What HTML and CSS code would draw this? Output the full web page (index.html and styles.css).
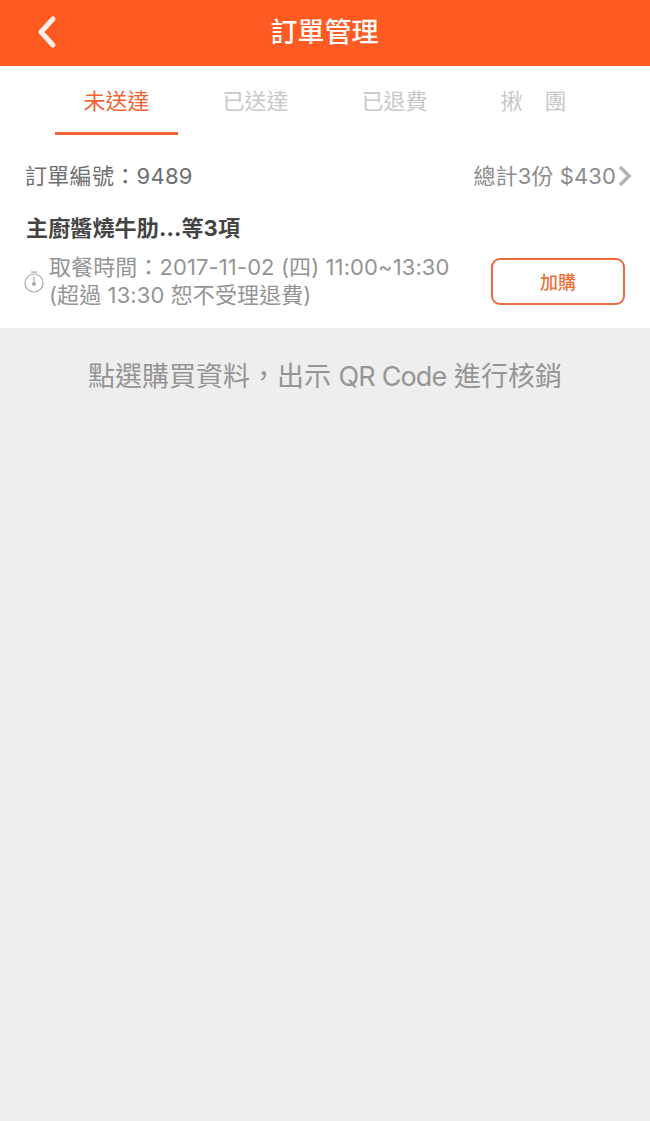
FILE: index.html
```html
<!DOCTYPE html>
<html lang="zh-Hant">
<head>
<meta charset="utf-8">
<title>訂單管理</title>
<link rel="stylesheet" href="styles.css">
</head>
<body>
<header class="topbar">
  <svg class="back" width="24" height="34" viewBox="0 0 24 34"><path d="M18 4 L6 17 L18 30" fill="none" stroke="#f6eee9" stroke-width="5" stroke-linecap="round" stroke-linejoin="round"/></svg>
  <h1 class="title">訂單管理</h1>
</header>
<nav class="tabs">
  <div class="tab active"><span>未送達</span></div>
  <div class="tab"><span>已送達</span></div>
  <div class="tab"><span>已退費</span></div>
  <div class="tab"><span>揪　團</span></div>
</nav>
<section class="order">
  <div class="order-head">
    <span class="num">訂單編號：9489</span>
    <span class="total">總計3份 $430<svg class="chev" width="15" height="22" viewBox="0 0 15 22"><path d="M3 2 L12 11 L3 20" fill="none" stroke="#b4b4b4" stroke-width="3.6"/></svg></span>
  </div>
  <div class="order-name">主廚醬燒牛肋...等3項</div>
  <div class="order-foot">
    <svg class="clock" width="20" height="24" viewBox="0 0 20 24"><g fill="none" stroke="#a8a8a8" stroke-width="1.2"><circle cx="10" cy="13" r="9"/><path d="M7 2.2 H13 M10 7 V13"/></g><circle cx="10" cy="14" r="2" fill="#a8a8a8"/></svg>
    <div class="time">取餐時間：2017-11-02 (四) 11:00~13:30<br>(超過 13:30 恕不受理退費)</div>
    <button class="buy">加購</button>
  </div>
</section>
<main class="hint">點選購買資料，出示 <span class="latin">QR Code</span> 進行核銷</main>
</body>
</html>
```
FILE: styles.css
```css
* { box-sizing: border-box; }
html, body { margin: 0; height: 100%; }
body {
  width: 650px;
  height: 1121px;
  overflow: hidden;
  display: flex;
  flex-direction: column;
  background: #eeeeee;
  font-family: "Inter", "Noto Sans CJK TC", sans-serif;
}
.topbar {
  position: relative;
  height: 66px;
  background: #ff5a22;
  display: flex;
  align-items: center;
  justify-content: center;
  flex: none;
}
.back { position: absolute; left: 35px; top: 15px; }
.title {
  margin: 0 1px 2px 0;
  color: #fff;
  font-size: 27px;
  font-weight: 500;
  line-height: 1;
}
.tabs {
  flex: none;
  height: 70px;
  background: #fff;
  display: grid;
  grid-template-columns: repeat(4, 123px);
  column-gap: 16px;
  padding-left: 55px;
}
.tab {
  height: 69px;
  padding-top: 20px;
  text-align: center;
  font-size: 22px;
  line-height: 30px;
  color: #c8c8c8;
}
.tab.active {
  color: #f26130;
  border-bottom: 3px solid #f26130;
}
.order {
  flex: none;
  height: 192px;
  background: #fff;
  padding: 24px 25px 0 25px;
}
.order-head {
  display: flex;
  justify-content: space-between;
  align-items: center;
  font-size: 22px;
  line-height: 32px;
  color: #6e6e6e;
}
.num { letter-spacing: 0.3px; }
.total {
  display: flex;
  align-items: center;
  color: #8c8c8c;
  margin-right: -7px;
  letter-spacing: 0.1px;
}
.chev { margin-left: 1px; }
.order-name {
  margin-top: 20px;
  margin-left: 1px;
  font-size: 22px;
  line-height: 32px;
  font-weight: 700;
  letter-spacing: 0.15px;
  color: #444;
}
.order-foot {
  display: flex;
  align-items: center;
  margin-top: 9px;
  margin-left: -1px;
}
.clock { flex: none; margin-right: 5px; margin-top: 2px; }
.time {
  flex: 1;
  font-size: 22px;
  line-height: 28px;
  letter-spacing: 0.1px;
  color: #949494;
  white-space: nowrap;
}
.buy {
  flex: none;
  width: 134px;
  height: 47px;
  border: 2px solid #ec6a3c;
  border-radius: 9px;
  background: #fff;
  color: #f0703c;
  font: 500 18px "Inter", "Noto Sans CJK TC", sans-serif;
  padding: 0;
}
.hint {
  flex: 1;
  padding-top: 31px;
  text-align: center;
  font-size: 27px;
  line-height: 36px;
  color: #959595;
}
.latin { letter-spacing: -0.85px; }
```
